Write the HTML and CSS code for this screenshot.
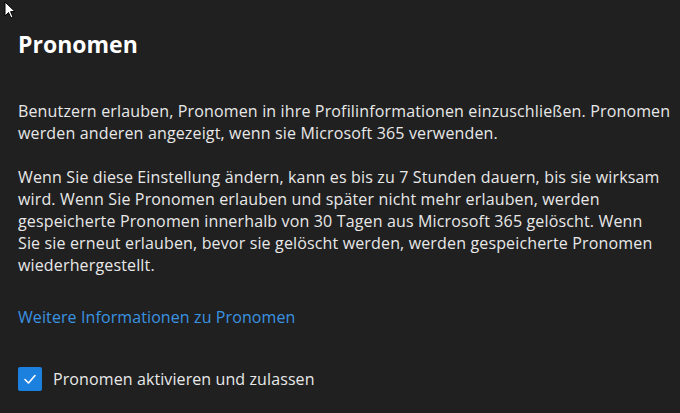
FILE: index.html
```html
<!DOCTYPE html>
<html lang="de">
<head>
<meta charset="utf-8">
<title>Pronomen</title>
<link rel="stylesheet" href="styles.css">
</head>
<body>
<svg class="cursor" width="14" height="20" viewBox="0 0 14 20" aria-hidden="true"><path d="M1 1 L1 15 L4.5 11.5 L7 17 L9 16 L6.6 10.6 L11 10.6 Z" fill="#fff" stroke="#000" stroke-width="1"/></svg>
<main class="panel">
  <h1 class="title">Pronomen</h1>
  <p class="text">Benutzern erlauben, Pronomen in ihre Profilinformationen einzuschließen. Pronomen werden anderen angezeigt, wenn sie Microsoft 365 verwenden.</p>
  <p class="text">Wenn Sie diese Einstellung ändern, kann es bis zu 7 Stunden dauern, bis sie wirksam wird. Wenn Sie Pronomen erlauben und später nicht mehr erlauben, werden gespeicherte Pronomen innerhalb von 30 Tagen aus Microsoft 365 gelöscht. Wenn Sie&nbsp;sie erneut erlauben, bevor sie gelöscht werden, werden gespeicherte Pronomen wiederhergestellt.</p>
  <a class="link" href="#">Weitere Informationen zu Pronomen</a>
  <label class="check">
    <span class="box"><svg width="16" height="16" viewBox="0 0 16 16"><path d="M3 8.5 L6.5 12 L13 4.5" fill="none" stroke="#fff" stroke-width="1.6" stroke-linecap="round" stroke-linejoin="round"/></svg></span>
    <span class="check-label">Pronomen aktivieren und zulassen</span>
  </label>
</main>
</body>
</html>
```

FILE: styles.css
```css
html, body {
  margin: 0;
  padding: 0;
  background: #202020;
  height: 100%;
}
body {
  font-family: "Open Sans", "Noto Sans", sans-serif;
  color: #e8e8e8;
  overflow: hidden;
}
.cursor {
  position: absolute;
  left: 4px;
  top: 1px;
}
.panel {
  padding: 26px 6px 0 18px;
  display: flex;
  flex-direction: column;
  align-items: flex-start;
}
.title {
  margin: 0 0 38px;
  font-size: 23px;
  line-height: 36px;
  font-weight: 700;
  color: #ffffff;
}
.text {
  margin: 0 0 22px;
  font-size: 16px;
  letter-spacing: 0.15px;
  line-height: 22px;
}
.link {
  margin-top: 8px;
  font-size: 16px;
  letter-spacing: 0.1px;
  line-height: 22px;
  color: #3a93e0;
  text-decoration: none;
}
.check {
  margin-top: 39px;
  display: flex;
  align-items: center;
  gap: 11px;
}
.box {
  width: 24px;
  height: 24px;
  border-radius: 2px;
  background: #1c80df;
  display: flex;
  align-items: center;
  justify-content: center;
}
.check-label {
  font-size: 16px;
  letter-spacing: 0.1px;
  line-height: 22px;
}
```
